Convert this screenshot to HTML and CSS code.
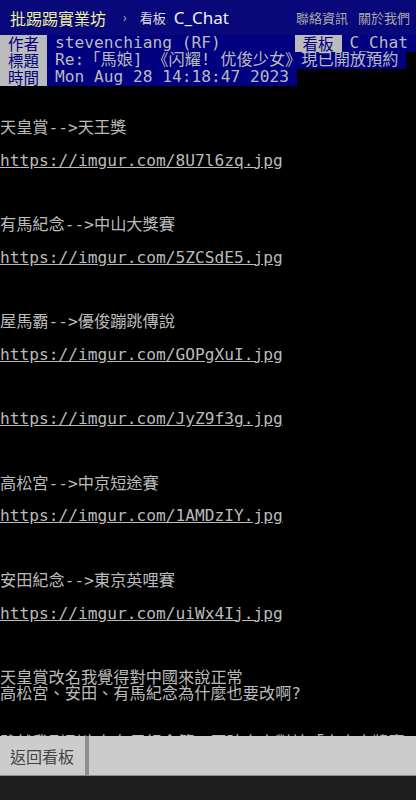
FILE: index.html
```html
<!DOCTYPE html>
<html lang="zh-Hant">
<head>
  <meta charset="UTF-8">
  <meta name="viewport" content="width=device-width, initial-scale=1.0">
  <title>Re: [馬娘] 《闪耀! 优俊少女》現已開放預約 - C_Chat</title>
  <link rel="stylesheet" href="styles.css">
</head>
<body>

  <div class="topbar">
    <a class="logo" href="#">批踢踢實業坊</a>
    <span class="crumb-sep">›</span>
    <span class="board-label">看板</span>
    <a class="board-name" href="#">C_Chat</a>
    <div class="right-links">
      <a href="#">聯絡資訊</a>
      <a href="#">關於我們</a>
    </div>
  </div>

  <!-- article header -->
  <div class="metaline">
    <span class="meta-tag">作者</span>
    <span class="meta-value grow">stevenchiang (RF)</span>
    <span class="meta-tag">看板</span>
    <span class="meta-value">C_Chat</span>
  </div>
  <div class="metaline">
    <span class="meta-tag">標題</span>
    <span class="meta-value">Re:「馬娘] 《闪耀! 优俊少女》現已開放預約</span>
  </div>
  <div class="metaline">
    <span class="meta-tag">時間</span>
    <span class="meta-value">Mon Aug 28 14:18:47 2023</span>
  </div>

  <!-- article body -->
  <div class="content">

天皇賞-->天王獎

<a href="#">https://imgur.com/8U7l6zq.jpg</a>



有馬紀念-->中山大獎賽

<a href="#">https://imgur.com/5ZCSdE5.jpg</a>



屋馬霸-->優俊蹦跳傳說

<a href="#">https://imgur.com/GOPgXuI.jpg</a>



<a href="#">https://imgur.com/JyZ9f3g.jpg</a>



高松宮-->中京短途賽

<a href="#">https://imgur.com/1AMDzIY.jpg</a>



安田紀念-->東京英哩賽

<a href="#">https://imgur.com/uiWx4Ij.jpg</a>



天皇賞改名我覺得對中國來說正常
高松宮、安田、有馬紀念為什麼也要改啊?


雖然我剛剛也在有馬紀念第，同時自家對於「中山大獎賽」
</div>

  <div class="bottombar">
    <a class="back-btn" href="#">返回看板</a>
  </div>
  <div class="bottom-strip"></div>

</body>
</html>
```

FILE: styles.css
```css
html, body {
  margin: 0;
  height: 100%;
}

body {
  background-color: #000;
  color: #bbb;
  font-family: "DejaVu Sans Mono", "Noto Sans CJK TC", monospace;
  display: flex;
  flex-direction: column;
  height: 100vh;
  overflow: hidden;
}

a {
  color: inherit;
  text-decoration: none;
}

/* top navigation */
.topbar {
  flex: none;
  height: 35px;
  background-color: #08087a;
  display: flex;
  align-items: center;
  padding: 0 6px 0 10px;
  font-family: "Noto Sans", "Noto Sans CJK TC", sans-serif;
  white-space: nowrap;
}

.logo {
  color: #f0f09a;
  font-size: 16px;
}

.crumb-sep {
  color: #aaa;
  font-size: 12px;
  margin: 0 13px 0 17px;
}

.board-label {
  color: #ddd;
  font-size: 13px;
}

.board-name {
  color: #eee;
  font-size: 17px;
  margin-left: 8px;
}

.right-links {
  margin-left: auto;
  display: flex;
  gap: 10px;
  color: #aaa;
  font-size: 13px;
}

/* article header lines */
.metaline {
  flex: none;
  display: flex;
  height: 17px;
  line-height: 15px;
  font-size: 16.2px;
  white-space: nowrap;
  overflow-x: clip;
  overflow-y: visible;
}

.meta-tag {
  flex: none;
  background-color: #bbb;
  color: #000080;
  padding: 0 8px;
  font-family: "Noto Sans CJK TC", sans-serif;
  font-size: 15.5px;
  line-height: 16px;
}

.meta-value {
  background-color: #000080;
  color: #bbb;
  padding: 0 8px;
}

.meta-value.grow {
  flex: 1;
}

/* article text */
.content {
  flex: 1;
  overflow: hidden;
  white-space: pre;
  font-size: 16.2px;
  line-height: 16.17px;
  padding-top: 2px;
}

.content a {
  text-decoration: underline;
}

/* bottom bar */
.bottombar {
  flex: none;
  height: 39px;
  background-color: #ccc;
  border-bottom: 1px solid #8a8a8a;
  display: flex;
}

.back-btn {
  width: 89px;
  box-sizing: border-box;
  border-right: 4px solid #8e8e8e;
  padding-left: 10px;
  display: flex;
  align-items: center;
  color: #444;
  font-family: "Noto Sans CJK TC", sans-serif;
  font-size: 16px;
}

.bottom-strip {
  flex: none;
  height: 24px;
  background-color: #1e1e1e;
}
```
